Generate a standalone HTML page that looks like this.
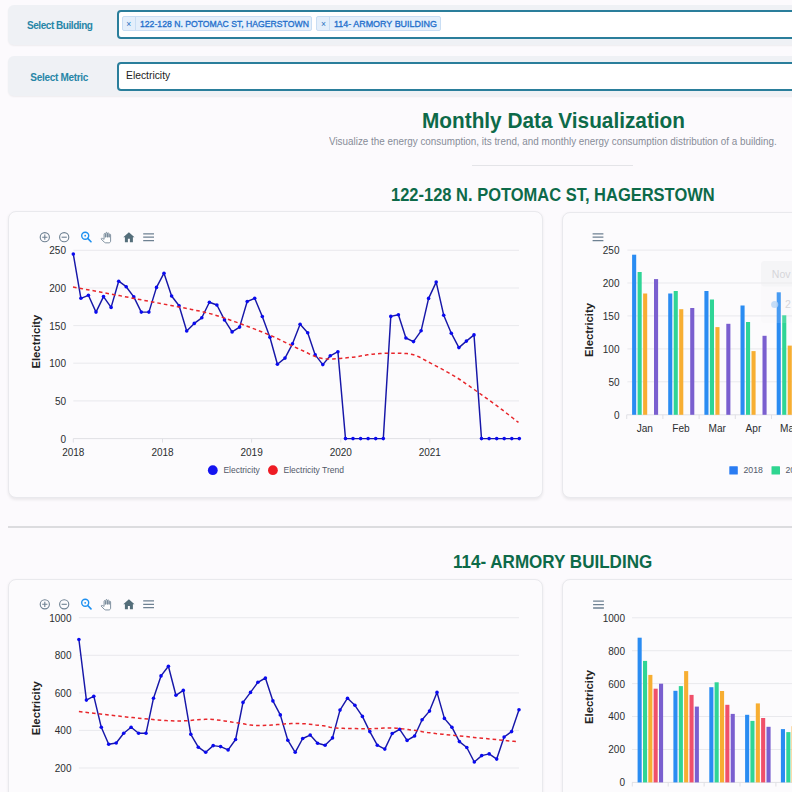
<!DOCTYPE html><html><head><meta charset="utf-8"><style>
html,body{margin:0;padding:0;}
body{width:792px;height:792px;overflow:hidden;background:#fcfafd;position:relative;font-family:"Liberation Sans",sans-serif;}
.abs{position:absolute;white-space:nowrap;}
.panel{position:absolute;left:7.5px;width:900px;background:#eff1f5;border-radius:6px;box-shadow:0 1px 2px rgba(0,0,0,0.06);}
.inp{position:absolute;left:116.8px;width:800px;background:#fff;border:2px solid #2a7e9b;border-radius:4px;box-sizing:border-box;}
.lbl{position:absolute;color:#2786a7;font-size:10px;font-weight:bold;letter-spacing:-0.45px;}
.tag{position:absolute;top:15.9px;height:15.6px;background:#e4effb;border:1px solid #c9def4;box-sizing:border-box;border-radius:2px;}
.tag .x{position:absolute;left:0;top:0;width:12px;height:13.6px;border-right:1px solid #c9def4;color:#2a6fc0;font-size:8.5px;line-height:14.5px;text-align:center;}
.tag .t{position:absolute;white-space:nowrap;top:0.2px;line-height:14px;color:#2470cc;font-size:9.8px;font-weight:normal;-webkit-text-stroke:0.35px #2470cc;transform-origin:0 50%;}
.card{position:absolute;background:#fcfbfd;border:1px solid #e9e9ed;border-radius:8px;box-sizing:border-box;box-shadow:0 1.5px 3px rgba(0,0,0,0.07);}
.h{position:absolute;color:#0d6a49;font-weight:bold;white-space:nowrap;}
</style></head><body>
<div class="panel" style="top:5px;height:40px;"></div><div class="panel" style="top:56.2px;height:40.3px;"></div><div class="lbl abs" style="left:27px;top:20px;">Select Building</div><div class="lbl abs" style="left:30.3px;top:71.6px;letter-spacing:-0.3px;">Select Metric</div><div class="inp" style="top:10.1px;height:29px;"></div><div class="inp" style="top:62px;height:29px;"></div><div class="tag" style="left:121.8px;width:190.7px;"><div class="x">&#215;</div><div class="t" style="left:16.8px;transform:scaleX(0.883);">122-128 N. POTOMAC ST, HAGERSTOWN</div></div><div class="tag" style="left:316.4px;width:124.6px;"><div class="x">&#215;</div><div class="t" style="left:16.9px;transform:scaleX(0.913);">114- ARMORY BUILDING</div></div><div class="abs" style="left:125.5px;top:69.2px;font-size:10.8px;color:#222;transform:scaleX(0.956);transform-origin:0 0;">Electricity</div><div class="h" style="left:421.8px;top:109px;font-size:21.5px;transform:scaleX(0.967);transform-origin:0 0;">Monthly Data Visualization</div><div class="abs" style="left:328.5px;top:134.6px;font-size:10.6px;transform:scaleX(0.931);transform-origin:0 0;color:#878c98;">Visualize the energy consumption, its trend, and monthly energy consumption distribution of a building.</div><div class="abs" style="left:472.4px;top:164.5px;width:160.2px;height:1px;background:#e4e4e8;"></div><div class="h" style="left:390.9px;top:184.6px;font-size:17.6px;transform:scaleX(0.937);transform-origin:0 0;">122-128 N. POTOMAC ST, HAGERSTOWN</div><div class="abs" style="left:7.5px;top:526px;width:800px;height:1.5px;background:#dcdcdf;"></div><div class="h" style="left:452.7px;top:551.6px;font-size:17.6px;transform:scaleX(0.969);transform-origin:0 0;">114- ARMORY BUILDING</div><div class="card" style="left:7.6px;top:211.4px;width:535.8px;height:286.8px;"></div><div class="card" style="left:561.7px;top:211.5px;width:300px;height:286.7px;"></div><div class="card" style="left:7.6px;top:579px;width:535.6px;height:300px;"></div><div class="card" style="left:561.5px;top:579px;width:300px;height:300px;"></div><svg class="abs" style="left:0;top:0" width="792" height="792" viewBox="0 0 792 792" font-family=""Liberation Sans", sans-serif"><line x1="73.3" y1="250.3" x2="519" y2="250.3" stroke="#e9e9ed" stroke-width="1"/><line x1="73.3" y1="288.0" x2="519" y2="288.0" stroke="#e9e9ed" stroke-width="1"/><line x1="73.3" y1="325.6" x2="519" y2="325.6" stroke="#e9e9ed" stroke-width="1"/><line x1="73.3" y1="363.2" x2="519" y2="363.2" stroke="#e9e9ed" stroke-width="1"/><line x1="73.3" y1="400.9" x2="519" y2="400.9" stroke="#e9e9ed" stroke-width="1"/><line x1="73.3" y1="438.6" x2="519" y2="438.6" stroke="#e0e0e5" stroke-width="1"/><text x="66" y="254.2" text-anchor="end" font-size="10" fill="#2b2e30">250</text><text x="66" y="291.9" text-anchor="end" font-size="10" fill="#2b2e30">200</text><text x="66" y="329.5" text-anchor="end" font-size="10" fill="#2b2e30">150</text><text x="66" y="367.1" text-anchor="end" font-size="10" fill="#2b2e30">100</text><text x="66" y="404.8" text-anchor="end" font-size="10" fill="#2b2e30">50</text><text x="66" y="442.5" text-anchor="end" font-size="10" fill="#2b2e30">0</text><line x1="73.3" y1="438.6" x2="73.3" y2="442.6" stroke="#e0e0e5"/><text x="73.3" y="456" text-anchor="middle" font-size="10" fill="#2b2e30">2018</text><line x1="162.5" y1="438.6" x2="162.5" y2="442.6" stroke="#e0e0e5"/><text x="162.5" y="456" text-anchor="middle" font-size="10" fill="#2b2e30">2018</text><line x1="251.6" y1="438.6" x2="251.6" y2="442.6" stroke="#e0e0e5"/><text x="251.6" y="456" text-anchor="middle" font-size="10" fill="#2b2e30">2019</text><line x1="340.8" y1="438.6" x2="340.8" y2="442.6" stroke="#e0e0e5"/><text x="340.8" y="456" text-anchor="middle" font-size="10" fill="#2b2e30">2020</text><line x1="429.8" y1="438.6" x2="429.8" y2="442.6" stroke="#e0e0e5"/><text x="429.8" y="456" text-anchor="middle" font-size="10" fill="#2b2e30">2021</text><text transform="translate(39.6,341.6) rotate(-90)" text-anchor="middle" font-size="11.3" font-weight="bold" fill="#222">Electricity</text><polyline points="73.3,254.1 80.9,298.3 88.4,295.3 96.0,312.1 103.5,296.6 111.1,307.4 118.7,281.2 126.2,286.7 133.8,296.9 141.3,312.1 148.9,312.1 156.5,287.4 164.0,273.2 171.6,296.0 179.1,305.8 186.7,331.0 194.3,323.4 201.8,317.8 209.4,302.2 216.9,305.0 224.5,319.9 232.1,331.9 239.6,327.1 247.2,301.5 254.7,298.3 262.3,316.5 269.9,337.2 277.4,364.3 285.0,358.1 292.5,343.8 300.1,324.3 307.7,332.8 315.2,354.9 322.8,364.6 330.3,355.8 337.9,351.7 345.5,438.6 353.0,438.6 360.6,438.6 368.1,438.6 375.7,438.6 383.3,438.6 390.8,316.4 398.4,314.7 405.9,338.0 413.5,341.6 421.1,330.8 428.6,298.4 436.2,282.1 443.7,315.2 451.3,333.2 458.9,347.6 466.4,341.1 474.0,334.9 481.5,438.6 489.1,438.6 496.7,438.6 504.2,438.6 511.8,438.6 519.3,438.6" fill="none" stroke="#1717a8" stroke-width="1.45" stroke-linejoin="round"/><circle cx="73.3" cy="254.1" r="1.8" fill="#0a0af0"/><circle cx="80.9" cy="298.3" r="1.8" fill="#0a0af0"/><circle cx="88.4" cy="295.3" r="1.8" fill="#0a0af0"/><circle cx="96.0" cy="312.1" r="1.8" fill="#0a0af0"/><circle cx="103.5" cy="296.6" r="1.8" fill="#0a0af0"/><circle cx="111.1" cy="307.4" r="1.8" fill="#0a0af0"/><circle cx="118.7" cy="281.2" r="1.8" fill="#0a0af0"/><circle cx="126.2" cy="286.7" r="1.8" fill="#0a0af0"/><circle cx="133.8" cy="296.9" r="1.8" fill="#0a0af0"/><circle cx="141.3" cy="312.1" r="1.8" fill="#0a0af0"/><circle cx="148.9" cy="312.1" r="1.8" fill="#0a0af0"/><circle cx="156.5" cy="287.4" r="1.8" fill="#0a0af0"/><circle cx="164.0" cy="273.2" r="1.8" fill="#0a0af0"/><circle cx="171.6" cy="296.0" r="1.8" fill="#0a0af0"/><circle cx="179.1" cy="305.8" r="1.8" fill="#0a0af0"/><circle cx="186.7" cy="331.0" r="1.8" fill="#0a0af0"/><circle cx="194.3" cy="323.4" r="1.8" fill="#0a0af0"/><circle cx="201.8" cy="317.8" r="1.8" fill="#0a0af0"/><circle cx="209.4" cy="302.2" r="1.8" fill="#0a0af0"/><circle cx="216.9" cy="305.0" r="1.8" fill="#0a0af0"/><circle cx="224.5" cy="319.9" r="1.8" fill="#0a0af0"/><circle cx="232.1" cy="331.9" r="1.8" fill="#0a0af0"/><circle cx="239.6" cy="327.1" r="1.8" fill="#0a0af0"/><circle cx="247.2" cy="301.5" r="1.8" fill="#0a0af0"/><circle cx="254.7" cy="298.3" r="1.8" fill="#0a0af0"/><circle cx="262.3" cy="316.5" r="1.8" fill="#0a0af0"/><circle cx="269.9" cy="337.2" r="1.8" fill="#0a0af0"/><circle cx="277.4" cy="364.3" r="1.8" fill="#0a0af0"/><circle cx="285.0" cy="358.1" r="1.8" fill="#0a0af0"/><circle cx="292.5" cy="343.8" r="1.8" fill="#0a0af0"/><circle cx="300.1" cy="324.3" r="1.8" fill="#0a0af0"/><circle cx="307.7" cy="332.8" r="1.8" fill="#0a0af0"/><circle cx="315.2" cy="354.9" r="1.8" fill="#0a0af0"/><circle cx="322.8" cy="364.6" r="1.8" fill="#0a0af0"/><circle cx="330.3" cy="355.8" r="1.8" fill="#0a0af0"/><circle cx="337.9" cy="351.7" r="1.8" fill="#0a0af0"/><circle cx="345.5" cy="438.6" r="1.8" fill="#0a0af0"/><circle cx="353.0" cy="438.6" r="1.8" fill="#0a0af0"/><circle cx="360.6" cy="438.6" r="1.8" fill="#0a0af0"/><circle cx="368.1" cy="438.6" r="1.8" fill="#0a0af0"/><circle cx="375.7" cy="438.6" r="1.8" fill="#0a0af0"/><circle cx="383.3" cy="438.6" r="1.8" fill="#0a0af0"/><circle cx="390.8" cy="316.4" r="1.8" fill="#0a0af0"/><circle cx="398.4" cy="314.7" r="1.8" fill="#0a0af0"/><circle cx="405.9" cy="338.0" r="1.8" fill="#0a0af0"/><circle cx="413.5" cy="341.6" r="1.8" fill="#0a0af0"/><circle cx="421.1" cy="330.8" r="1.8" fill="#0a0af0"/><circle cx="428.6" cy="298.4" r="1.8" fill="#0a0af0"/><circle cx="436.2" cy="282.1" r="1.8" fill="#0a0af0"/><circle cx="443.7" cy="315.2" r="1.8" fill="#0a0af0"/><circle cx="451.3" cy="333.2" r="1.8" fill="#0a0af0"/><circle cx="458.9" cy="347.6" r="1.8" fill="#0a0af0"/><circle cx="466.4" cy="341.1" r="1.8" fill="#0a0af0"/><circle cx="474.0" cy="334.9" r="1.8" fill="#0a0af0"/><circle cx="481.5" cy="438.6" r="1.8" fill="#0a0af0"/><circle cx="489.1" cy="438.6" r="1.8" fill="#0a0af0"/><circle cx="496.7" cy="438.6" r="1.8" fill="#0a0af0"/><circle cx="504.2" cy="438.6" r="1.8" fill="#0a0af0"/><circle cx="511.8" cy="438.6" r="1.8" fill="#0a0af0"/><circle cx="519.3" cy="438.6" r="1.8" fill="#0a0af0"/><polyline points="73.0,287.0 80.9,288.5 91.9,290.5 104.9,293.0 119.2,295.6 133.9,298.4 148.0,301.1 160.6,303.5 171.0,305.5 179.1,307.1 185.8,308.3 191.4,309.4 196.2,310.4 200.8,311.3 205.2,312.4 210.0,313.6 215.5,315.2 221.6,317.1 228.0,319.2 234.6,321.6 241.3,324.0 247.8,326.5 254.2,328.9 260.1,331.2 265.5,333.4 270.4,335.4 274.9,337.4 279.1,339.4 283.0,341.3 286.7,343.1 290.3,344.9 293.8,346.6 297.3,348.2 300.7,349.8 304.0,351.3 307.1,352.8 310.1,354.3 313.0,355.6 316.0,356.7 319.1,357.7 322.3,358.4 325.7,358.8 329.2,359.0 332.8,359.0 336.5,358.8 340.1,358.5 343.6,358.1 346.9,357.8 350.0,357.5 352.9,357.2 355.5,356.9 358.1,356.5 360.5,356.0 362.8,355.6 365.2,355.2 367.5,354.8 370.0,354.5 372.5,354.2 375.0,354.0 377.5,353.8 380.0,353.6 382.5,353.4 385.0,353.3 387.6,353.2 390.2,353.2 392.9,353.2 395.7,353.2 398.6,353.2 401.4,353.2 404.3,353.4 407.1,353.6 409.8,354.0 412.4,354.5 414.8,355.2 417.1,356.0 419.3,357.0 421.4,358.1 423.5,359.3 425.7,360.5 428.1,361.8 430.6,363.2 433.4,364.6 436.3,366.1 439.3,367.7 442.5,369.4 445.6,371.1 448.8,372.9 451.8,374.6 454.8,376.4 457.7,378.2 460.5,380.0 463.3,381.9 466.0,383.8 468.8,385.7 471.5,387.6 474.2,389.5 477.0,391.5 479.8,393.5 482.6,395.5 485.5,397.6 488.3,399.6 491.2,401.7 493.9,403.7 496.7,405.7 499.3,407.7 502.0,409.7 504.8,411.8 507.6,414.0 510.3,416.1 512.8,418.0 515.1,419.8 517.0,421.3 518.5,422.4" fill="none" stroke="#e8262b" stroke-width="1.5" stroke-dasharray="3.6 3"/><circle cx="212.8" cy="470.2" r="4.9" fill="#1414f0"/><text x="223.4" y="473.3" font-size="8.5" fill="#515869">Electricity</text><circle cx="272.9" cy="470.2" r="4.9" fill="#ee1c24"/><text x="283.5" y="473.3" font-size="8.5" fill="#515869">Electricity Trend</text><circle cx="44.8" cy="237.2" r="4.6" fill="none" stroke="#6e8192" stroke-width="1.1"/><path d="M42.199999999999996 237.2h5.2M44.8 234.6v5.2" stroke="#6e8192" stroke-width="1.1"/><circle cx="64.19999999999999" cy="237.2" r="4.6" fill="none" stroke="#6e8192" stroke-width="1.1"/><path d="M61.59999999999999 237.2h5.2" stroke="#6e8192" stroke-width="1.1"/><circle cx="85.19999999999999" cy="235.7" r="3.5" fill="none" stroke="#1e90f0" stroke-width="1.4"/><circle cx="85.19999999999999" cy="235.7" r="0.9" fill="#1e90f0"/><path d="M87.69999999999999 238.39999999999998l3.3 3.4" stroke="#1e90f0" stroke-width="1.6" stroke-linecap="round"/><g transform="translate(100.60,232.40) scale(0.435)"><path d="M23 5.5V20c0 2.2-1.8 4-4 4h-7.3c-1.08 0-2.1-.43-2.85-1.19L1 14.83s1.26-1.23 1.3-1.25c.22-.19.49-.29.79-.29.22 0 .42.06.6.16.04.01 4.31 2.46 4.31 2.46V4c0-.83.67-1.5 1.5-1.5S11 3.17 11 4v7h1V1.5c0-.83.67-1.5 1.5-1.5S15 .67 15 1.5V11h1V2.5c0-.83.67-1.5 1.5-1.5s1.5.67 1.5 1.5V11h1V5.5c0-.83.67-1.5 1.5-1.5s1.5.67 1.5 1.5z" fill="#fff" stroke="#6e8192" stroke-width="2"/></g><path d="M128.89999999999998 232.2l-5.6 5h1.6v5h3v-3.4h2v3.4h3v-5h1.6z" fill="#546e7a"/><path d="M143.2 233.79999999999998h10.8M143.2 237.2h10.8M143.2 240.6h10.8" stroke="#6e8192" stroke-width="1.3"/><line x1="627.4" y1="250.1" x2="800" y2="250.1" stroke="#e9e9ed"/><line x1="627.4" y1="283.0" x2="800" y2="283.0" stroke="#e9e9ed"/><line x1="627.4" y1="315.9" x2="800" y2="315.9" stroke="#e9e9ed"/><line x1="627.4" y1="348.9" x2="800" y2="348.9" stroke="#e9e9ed"/><line x1="627.4" y1="381.8" x2="800" y2="381.8" stroke="#e9e9ed"/><line x1="626.7" y1="414.8" x2="800" y2="414.8" stroke="#e0e0e5"/><text x="619.5" y="254.0" text-anchor="end" font-size="10" fill="#2b2e30">250</text><text x="619.5" y="286.9" text-anchor="end" font-size="10" fill="#2b2e30">200</text><text x="619.5" y="319.8" text-anchor="end" font-size="10" fill="#2b2e30">150</text><text x="619.5" y="352.8" text-anchor="end" font-size="10" fill="#2b2e30">100</text><text x="619.5" y="385.7" text-anchor="end" font-size="10" fill="#2b2e30">50</text><text x="619.5" y="418.7" text-anchor="end" font-size="10" fill="#2b2e30">0</text><line x1="626.7" y1="414.8" x2="626.7" y2="419" stroke="#e0e0e5"/><text x="644.8" y="432.3" text-anchor="middle" font-size="10.1" fill="#2b2e30">Jan</text><line x1="662.9" y1="414.8" x2="662.9" y2="419" stroke="#e0e0e5"/><text x="681.0" y="432.3" text-anchor="middle" font-size="10.1" fill="#2b2e30">Feb</text><line x1="699.1" y1="414.8" x2="699.1" y2="419" stroke="#e0e0e5"/><text x="717.2" y="432.3" text-anchor="middle" font-size="10.1" fill="#2b2e30">Mar</text><line x1="735.3" y1="414.8" x2="735.3" y2="419" stroke="#e0e0e5"/><text x="753.4" y="432.3" text-anchor="middle" font-size="10.1" fill="#2b2e30">Apr</text><line x1="771.5" y1="414.8" x2="771.5" y2="419" stroke="#e0e0e5"/><text x="789.6" y="432.3" text-anchor="middle" font-size="10.1" fill="#2b2e30">May</text><line x1="807.7" y1="414.8" x2="807.7" y2="419" stroke="#e0e0e5"/><rect x="632.1" y="254.7" width="4.1" height="160.1" fill="#2a8cf2"/><rect x="637.6" y="272" width="4.1" height="142.8" fill="#2fd596"/><rect x="643.1" y="293.5" width="4.1" height="121.3" fill="#f7ae32"/><rect x="654.0" y="279.1" width="4.1" height="135.7" fill="#7a5fcf"/><rect x="668.2" y="293.5" width="4.1" height="121.3" fill="#2a8cf2"/><rect x="673.7" y="291" width="4.1" height="123.8" fill="#2fd596"/><rect x="679.2" y="309.2" width="4.1" height="105.6" fill="#f7ae32"/><rect x="690.2" y="308" width="4.1" height="106.8" fill="#7a5fcf"/><rect x="704.4" y="291" width="4.1" height="123.8" fill="#2a8cf2"/><rect x="709.9" y="299.5" width="4.1" height="115.3" fill="#2fd596"/><rect x="715.4" y="327.1" width="4.1" height="87.7" fill="#f7ae32"/><rect x="726.3" y="323.8" width="4.1" height="91.0" fill="#7a5fcf"/><rect x="740.5" y="305.5" width="4.1" height="109.3" fill="#2a8cf2"/><rect x="746.0" y="322" width="4.1" height="92.8" fill="#2fd596"/><rect x="751.5" y="351.1" width="4.1" height="63.7" fill="#f7ae32"/><rect x="762.5" y="335.8" width="4.1" height="79.0" fill="#7a5fcf"/><rect x="776.7" y="292.3" width="4.1" height="122.5" fill="#2a8cf2"/><rect x="782.2" y="315.3" width="4.1" height="99.5" fill="#2fd596"/><rect x="787.7" y="345.6" width="4.1" height="69.2" fill="#f7ae32"/><text transform="translate(593.2,330) rotate(-90)" text-anchor="middle" font-size="11.3" font-weight="bold" fill="#222">Electricity</text><path d="M592.6 233.79999999999998h10.8M592.6 237.2h10.8M592.6 240.6h10.8" stroke="#6e8192" stroke-width="1.3"/><rect x="729.3" y="466.2" width="8.5" height="8.4" rx="0.6" fill="#2a7cf2"/><text x="743.5" y="473" font-size="8.7" fill="#515869">2018</text><rect x="771.5" y="466.2" width="8.5" height="8.4" rx="0.6" fill="#2fd590"/><text x="785.5" y="473" font-size="8.7" fill="#515869">2019</text><rect x="761" y="261" width="60" height="62" rx="4" fill="#f0f0f3" opacity="0.15"/><rect x="761" y="261" width="60" height="25.5" rx="4" fill="#ebebee" opacity="0.3"/><text x="771.8" y="277.5" font-size="10.5" fill="#d6d6da">Nov</text><circle cx="774.7" cy="304.5" r="3.6" fill="#b8d6f6" opacity="0.8"/><text x="785" y="308" font-size="10.5" fill="#d6d6da">2</text><line x1="78.9" y1="617.7" x2="519" y2="617.7" stroke="#e9e9ed"/><line x1="78.9" y1="655.3" x2="519" y2="655.3" stroke="#e9e9ed"/><line x1="78.9" y1="692.9" x2="519" y2="692.9" stroke="#e9e9ed"/><line x1="78.9" y1="730.4" x2="519" y2="730.4" stroke="#e9e9ed"/><line x1="78.9" y1="768.0" x2="519" y2="768.0" stroke="#e9e9ed"/><text x="71.5" y="621.6" text-anchor="end" font-size="10" fill="#2b2e30">1000</text><text x="71.5" y="659.2" text-anchor="end" font-size="10" fill="#2b2e30">800</text><text x="71.5" y="696.8" text-anchor="end" font-size="10" fill="#2b2e30">600</text><text x="71.5" y="734.3" text-anchor="end" font-size="10" fill="#2b2e30">400</text><text x="71.5" y="771.9" text-anchor="end" font-size="10" fill="#2b2e30">200</text><text transform="translate(39.6,708.3) rotate(-90)" text-anchor="middle" font-size="11.3" font-weight="bold" fill="#222">Electricity</text><polyline points="78.9,639.5 86.4,700.1 93.8,696.2 101.3,727.3 108.7,744.2 116.2,743.0 123.7,733.3 131.1,727.3 138.6,733.3 146.0,733.3 153.5,698.2 161.0,675.9 168.4,666.2 175.9,695.3 183.3,690.4 190.8,734.3 198.3,747.2 205.7,752.3 213.2,745.6 220.6,746.6 228.1,749.9 235.6,739.5 243.0,702.4 250.5,692.4 257.9,682.3 265.4,678.0 272.9,700.9 280.3,714.9 287.8,740.2 295.2,752.3 302.7,738.5 310.2,735.1 317.6,743.3 325.1,745.2 332.5,737.9 340.0,710.1 347.5,698.2 354.9,705.3 362.4,716.4 369.8,731.6 377.3,745.2 384.8,749.1 392.2,733.5 399.7,729.3 407.1,740.4 414.6,736.0 422.1,719.7 429.5,711.1 437.0,692.4 444.4,718.4 451.9,727.2 459.4,741.6 466.8,747.5 474.3,762.0 481.7,755.6 489.2,753.9 496.7,759.1 504.1,737.0 511.6,731.6 519.0,709.7" fill="none" stroke="#1717a8" stroke-width="1.45" stroke-linejoin="round"/><circle cx="78.9" cy="639.5" r="1.8" fill="#0a0af0"/><circle cx="86.4" cy="700.1" r="1.8" fill="#0a0af0"/><circle cx="93.8" cy="696.2" r="1.8" fill="#0a0af0"/><circle cx="101.3" cy="727.3" r="1.8" fill="#0a0af0"/><circle cx="108.7" cy="744.2" r="1.8" fill="#0a0af0"/><circle cx="116.2" cy="743.0" r="1.8" fill="#0a0af0"/><circle cx="123.7" cy="733.3" r="1.8" fill="#0a0af0"/><circle cx="131.1" cy="727.3" r="1.8" fill="#0a0af0"/><circle cx="138.6" cy="733.3" r="1.8" fill="#0a0af0"/><circle cx="146.0" cy="733.3" r="1.8" fill="#0a0af0"/><circle cx="153.5" cy="698.2" r="1.8" fill="#0a0af0"/><circle cx="161.0" cy="675.9" r="1.8" fill="#0a0af0"/><circle cx="168.4" cy="666.2" r="1.8" fill="#0a0af0"/><circle cx="175.9" cy="695.3" r="1.8" fill="#0a0af0"/><circle cx="183.3" cy="690.4" r="1.8" fill="#0a0af0"/><circle cx="190.8" cy="734.3" r="1.8" fill="#0a0af0"/><circle cx="198.3" cy="747.2" r="1.8" fill="#0a0af0"/><circle cx="205.7" cy="752.3" r="1.8" fill="#0a0af0"/><circle cx="213.2" cy="745.6" r="1.8" fill="#0a0af0"/><circle cx="220.6" cy="746.6" r="1.8" fill="#0a0af0"/><circle cx="228.1" cy="749.9" r="1.8" fill="#0a0af0"/><circle cx="235.6" cy="739.5" r="1.8" fill="#0a0af0"/><circle cx="243.0" cy="702.4" r="1.8" fill="#0a0af0"/><circle cx="250.5" cy="692.4" r="1.8" fill="#0a0af0"/><circle cx="257.9" cy="682.3" r="1.8" fill="#0a0af0"/><circle cx="265.4" cy="678.0" r="1.8" fill="#0a0af0"/><circle cx="272.9" cy="700.9" r="1.8" fill="#0a0af0"/><circle cx="280.3" cy="714.9" r="1.8" fill="#0a0af0"/><circle cx="287.8" cy="740.2" r="1.8" fill="#0a0af0"/><circle cx="295.2" cy="752.3" r="1.8" fill="#0a0af0"/><circle cx="302.7" cy="738.5" r="1.8" fill="#0a0af0"/><circle cx="310.2" cy="735.1" r="1.8" fill="#0a0af0"/><circle cx="317.6" cy="743.3" r="1.8" fill="#0a0af0"/><circle cx="325.1" cy="745.2" r="1.8" fill="#0a0af0"/><circle cx="332.5" cy="737.9" r="1.8" fill="#0a0af0"/><circle cx="340.0" cy="710.1" r="1.8" fill="#0a0af0"/><circle cx="347.5" cy="698.2" r="1.8" fill="#0a0af0"/><circle cx="354.9" cy="705.3" r="1.8" fill="#0a0af0"/><circle cx="362.4" cy="716.4" r="1.8" fill="#0a0af0"/><circle cx="369.8" cy="731.6" r="1.8" fill="#0a0af0"/><circle cx="377.3" cy="745.2" r="1.8" fill="#0a0af0"/><circle cx="384.8" cy="749.1" r="1.8" fill="#0a0af0"/><circle cx="392.2" cy="733.5" r="1.8" fill="#0a0af0"/><circle cx="399.7" cy="729.3" r="1.8" fill="#0a0af0"/><circle cx="407.1" cy="740.4" r="1.8" fill="#0a0af0"/><circle cx="414.6" cy="736.0" r="1.8" fill="#0a0af0"/><circle cx="422.1" cy="719.7" r="1.8" fill="#0a0af0"/><circle cx="429.5" cy="711.1" r="1.8" fill="#0a0af0"/><circle cx="437.0" cy="692.4" r="1.8" fill="#0a0af0"/><circle cx="444.4" cy="718.4" r="1.8" fill="#0a0af0"/><circle cx="451.9" cy="727.2" r="1.8" fill="#0a0af0"/><circle cx="459.4" cy="741.6" r="1.8" fill="#0a0af0"/><circle cx="466.8" cy="747.5" r="1.8" fill="#0a0af0"/><circle cx="474.3" cy="762.0" r="1.8" fill="#0a0af0"/><circle cx="481.7" cy="755.6" r="1.8" fill="#0a0af0"/><circle cx="489.2" cy="753.9" r="1.8" fill="#0a0af0"/><circle cx="496.7" cy="759.1" r="1.8" fill="#0a0af0"/><circle cx="504.1" cy="737.0" r="1.8" fill="#0a0af0"/><circle cx="511.6" cy="731.6" r="1.8" fill="#0a0af0"/><circle cx="519.0" cy="709.7" r="1.8" fill="#0a0af0"/><polyline points="78.9,711.5 83.1,712.0 88.8,712.7 95.6,713.5 103.1,714.3 110.9,715.2 118.7,716.1 126.1,716.9 132.7,717.6 138.7,718.2 144.6,718.8 150.3,719.3 155.9,719.8 161.3,720.2 166.5,720.6 171.5,720.8 176.4,721.0 181.0,721.0 185.5,720.8 189.7,720.5 193.7,720.1 197.7,719.8 201.5,719.5 205.4,719.3 209.2,719.3 213.0,719.5 216.9,719.9 220.6,720.3 224.3,720.9 227.9,721.5 231.4,722.0 234.8,722.6 238.0,723.0 240.9,723.4 243.5,723.8 245.8,724.3 248.1,724.7 250.4,725.0 252.9,725.3 255.8,725.5 259.1,725.6 263.0,725.5 267.4,725.3 272.1,725.0 277.1,724.6 282.0,724.2 286.9,723.8 291.5,723.6 295.6,723.5 299.4,723.6 303.0,723.7 306.4,723.9 309.6,724.2 312.7,724.5 315.6,724.9 318.4,725.2 321.0,725.5 323.3,725.8 325.2,726.1 326.8,726.5 328.3,726.8 329.8,727.2 331.6,727.5 333.7,727.8 336.3,728.0 339.5,728.2 343.2,728.3 347.3,728.5 351.5,728.5 355.9,728.6 360.2,728.7 364.2,728.7 368.0,728.7 371.5,728.7 374.8,728.5 378.0,728.4 381.0,728.2 384.1,728.1 387.0,728.0 390.0,727.9 393.0,728.0 396.0,728.2 399.1,728.4 402.2,728.8 405.2,729.1 408.1,729.5 410.9,729.9 413.6,730.3 416.0,730.6 418.1,730.9 419.8,731.2 421.2,731.4 422.6,731.7 424.0,731.9 425.6,732.2 427.5,732.5 430.0,732.8 432.8,733.1 435.7,733.5 438.8,733.8 442.2,734.2 446.0,734.6 450.1,735.0 454.8,735.5 460.0,736.0 466.3,736.6 474.0,737.4 482.4,738.2 491.0,739.1 499.5,739.9 507.2,740.7 513.6,741.3 518.3,741.8" fill="none" stroke="#e8262b" stroke-width="1.5" stroke-dasharray="3.6 3"/><circle cx="44.8" cy="604.3" r="4.6" fill="none" stroke="#6e8192" stroke-width="1.1"/><path d="M42.199999999999996 604.3h5.2M44.8 601.6999999999999v5.2" stroke="#6e8192" stroke-width="1.1"/><circle cx="64.19999999999999" cy="604.3" r="4.6" fill="none" stroke="#6e8192" stroke-width="1.1"/><path d="M61.59999999999999 604.3h5.2" stroke="#6e8192" stroke-width="1.1"/><circle cx="85.19999999999999" cy="602.8" r="3.5" fill="none" stroke="#1e90f0" stroke-width="1.4"/><circle cx="85.19999999999999" cy="602.8" r="0.9" fill="#1e90f0"/><path d="M87.69999999999999 605.5l3.3 3.4" stroke="#1e90f0" stroke-width="1.6" stroke-linecap="round"/><g transform="translate(100.60,599.50) scale(0.435)"><path d="M23 5.5V20c0 2.2-1.8 4-4 4h-7.3c-1.08 0-2.1-.43-2.85-1.19L1 14.83s1.26-1.23 1.3-1.25c.22-.19.49-.29.79-.29.22 0 .42.06.6.16.04.01 4.31 2.46 4.31 2.46V4c0-.83.67-1.5 1.5-1.5S11 3.17 11 4v7h1V1.5c0-.83.67-1.5 1.5-1.5S15 .67 15 1.5V11h1V2.5c0-.83.67-1.5 1.5-1.5s1.5.67 1.5 1.5V11h1V5.5c0-.83.67-1.5 1.5-1.5s1.5.67 1.5 1.5z" fill="#fff" stroke="#6e8192" stroke-width="2"/></g><path d="M128.89999999999998 599.3l-5.6 5h1.6v5h3v-3.4h2v3.4h3v-5h1.6z" fill="#546e7a"/><path d="M143.2 600.9h10.8M143.2 604.3h10.8M143.2 607.6999999999999h10.8" stroke="#6e8192" stroke-width="1.3"/><line x1="632" y1="617.8" x2="800" y2="617.8" stroke="#e9e9ed"/><line x1="632" y1="650.7" x2="800" y2="650.7" stroke="#e9e9ed"/><line x1="632" y1="683.6" x2="800" y2="683.6" stroke="#e9e9ed"/><line x1="632" y1="716.5" x2="800" y2="716.5" stroke="#e9e9ed"/><line x1="632" y1="749.5" x2="800" y2="749.5" stroke="#e9e9ed"/><line x1="632" y1="782.4" x2="800" y2="782.4" stroke="#e0e0e5"/><text x="625" y="621.7" text-anchor="end" font-size="10" fill="#2b2e30">1000</text><text x="625" y="654.6" text-anchor="end" font-size="10" fill="#2b2e30">800</text><text x="625" y="687.5" text-anchor="end" font-size="10" fill="#2b2e30">600</text><text x="625" y="720.4" text-anchor="end" font-size="10" fill="#2b2e30">400</text><text x="625" y="753.4" text-anchor="end" font-size="10" fill="#2b2e30">200</text><text x="625" y="786.3" text-anchor="end" font-size="10" fill="#2b2e30">0</text><line x1="632.3" y1="782.4" x2="632.3" y2="786.5" stroke="#e0e0e5"/><line x1="668.2" y1="782.4" x2="668.2" y2="786.5" stroke="#e0e0e5"/><line x1="704.1" y1="782.4" x2="704.1" y2="786.5" stroke="#e0e0e5"/><line x1="740.0" y1="782.4" x2="740.0" y2="786.5" stroke="#e0e0e5"/><line x1="775.9" y1="782.4" x2="775.9" y2="786.5" stroke="#e0e0e5"/><line x1="811.8" y1="782.4" x2="811.8" y2="786.5" stroke="#e0e0e5"/><rect x="637.6" y="637.7" width="4.1" height="144.7" fill="#2a8cf2"/><rect x="643.0" y="660.9" width="4.1" height="121.5" fill="#2fd596"/><rect x="648.3" y="674.9" width="4.1" height="107.5" fill="#f7ae32"/><rect x="653.6" y="688.7" width="4.1" height="93.7" fill="#f0506a"/><rect x="659.0" y="683.7" width="4.1" height="98.7" fill="#7a5fcf"/><rect x="673.4" y="690.8" width="4.1" height="91.6" fill="#2a8cf2"/><rect x="678.8" y="686.1" width="4.1" height="96.3" fill="#2fd596"/><rect x="684.1" y="671.1" width="4.1" height="111.3" fill="#f7ae32"/><rect x="689.5" y="694.9" width="4.1" height="87.5" fill="#f0506a"/><rect x="694.8" y="706.6" width="4.1" height="75.8" fill="#7a5fcf"/><rect x="709.3" y="687.2" width="4.1" height="95.2" fill="#2a8cf2"/><rect x="714.6" y="682.3" width="4.1" height="100.1" fill="#2fd596"/><rect x="720.0" y="691" width="4.1" height="91.4" fill="#f7ae32"/><rect x="725.3" y="704.8" width="4.1" height="77.6" fill="#f0506a"/><rect x="730.7" y="713.9" width="4.1" height="68.5" fill="#7a5fcf"/><rect x="745.1" y="714.8" width="4.1" height="67.6" fill="#2a8cf2"/><rect x="750.4" y="720.9" width="4.1" height="61.5" fill="#2fd596"/><rect x="755.8" y="703.4" width="4.1" height="79.0" fill="#f7ae32"/><rect x="761.1" y="718" width="4.1" height="64.4" fill="#f0506a"/><rect x="766.5" y="726.8" width="4.1" height="55.6" fill="#7a5fcf"/><rect x="780.9" y="729.1" width="4.1" height="53.3" fill="#2a8cf2"/><rect x="786.3" y="732.1" width="4.1" height="50.3" fill="#2fd596"/><rect x="791.6" y="726.2" width="4.1" height="56.2" fill="#f7ae32"/><text transform="translate(593.2,697) rotate(-90)" text-anchor="middle" font-size="11.3" font-weight="bold" fill="#222">Electricity</text><path d="M593.1 601.2h10.8M593.1 604.6h10.8M593.1 608.0h10.8" stroke="#6e8192" stroke-width="1.3"/></svg></body></html>
